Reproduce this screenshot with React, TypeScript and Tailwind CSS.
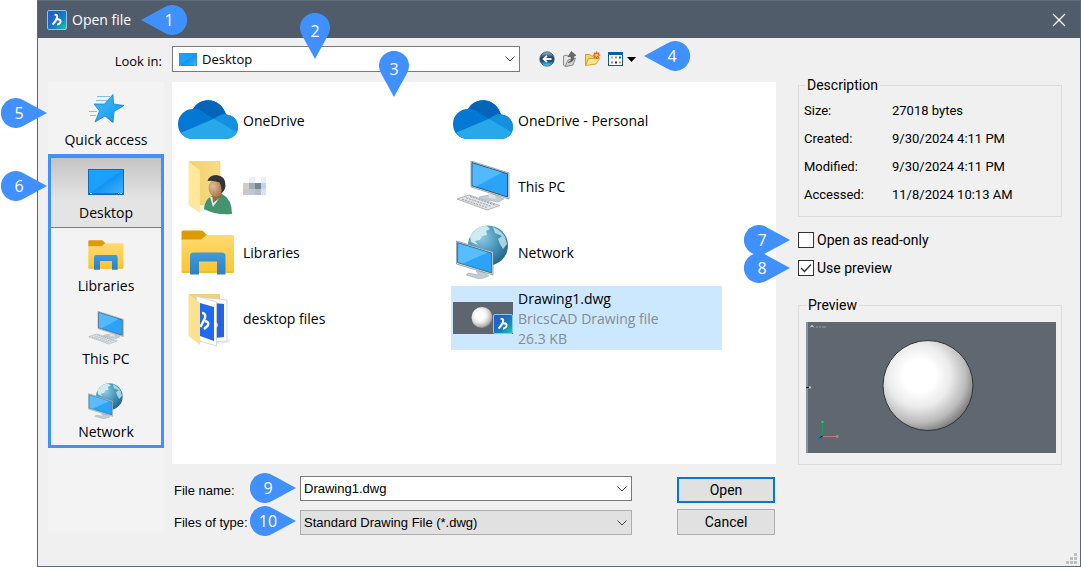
import React, { useState } from 'react';

type Direction = 'left' | 'right' | 'down';

interface CalloutProps {
  n: number;
  direction: Direction;
  className?: string;
}

const Callout: React.FC<CalloutProps> = ({ n, direction, className = '' }) => {
  const isDown = direction === 'down';
  const paths = {
    left: 'M0 15 L23 2.4 A15 15 0 1 1 23 27.6 Z',
    right: 'M46 15 L23 2.4 A15 15 0 1 0 23 27.6 Z',
    down: 'M15 46 L2.4 23 A15 15 0 1 1 27.6 23 Z',
  };
  const textPosition = {
    left: 'pl-[10px]',
    right: 'pr-[10px]',
    down: 'pb-[10px]',
  };

  return (
    <span
      className={`z-10 flex shrink-0 items-center justify-center text-white text-[16px] leading-[20px] font-['Open_Sans',sans-serif] pointer-events-none ${
        isDown ? 'w-[30px] h-[46px]' : 'w-[46px] h-[30px]'
      } ${textPosition[direction]} ${className}`}
    >
      <svg className="absolute inset-0 w-full h-full" viewBox={isDown ? '0 0 30 46' : '0 0 46 30'}>
        <path d={paths[direction]} fill="#4090ff" />
      </svg>
      <span className="relative">{n}</span>
    </span>
  );
};

const AppLogo: React.FC<{ className?: string }> = ({ className }) => (
  <svg className={className} viewBox="0 0 20 20">
    <defs>
      <linearGradient id="logo" x1="0" y1="0" x2="1" y2="1">
        <stop offset="0.3" stopColor="#1e62cf" />
        <stop offset="0.65" stopColor="#1686b8" />
        <stop offset="1" stopColor="#18d8a0" />
      </linearGradient>
    </defs>
    <rect x="0.5" y="0.5" width="19" height="19" rx="1.5" fill="url(#logo)" stroke="#8cc3ea" />
    <path d="M7.6 4.9 C10 4.6 10.6 5.6 9.9 8 C9.4 10 7.6 12.4 5.6 14.6" fill="none" stroke="#fff" strokeWidth="2" />
    <path d="M9.6 9.4 C13 8.8 14.4 10.6 13.2 12.8 C12.6 13.8 11.6 14.5 10 14.8" fill="none" stroke="#fff" strokeWidth="2" />
  </svg>
);

const DesktopIcon: React.FC<{ className?: string }> = ({ className }) => (
  <svg className={className} viewBox="0 0 36 26" preserveAspectRatio="none">
    <defs>
      <linearGradient id="desk" x1="0" y1="0" x2="1" y2="1">
        <stop offset="0" stopColor="#1ba4ff" />
        <stop offset="0.49" stopColor="#1a9ffb" />
        <stop offset="0.5" stopColor="#0f93f5" />
        <stop offset="1" stopColor="#46b4fb" />
      </linearGradient>
    </defs>
    <rect x="0.5" y="0.5" width="35" height="25" fill="url(#desk)" stroke="#0a6fb8" />
    <path d="M1 24.5 H35" stroke="#1080cc" />
    <path d="M2 24.5 h2 M30 24.5 h1.4 M32.4 24.5 h1.4" stroke="#fff" />
  </svg>
);

const StarIcon: React.FC = () => (
  <svg className="w-9 h-8" viewBox="0 0 36 32">
    <defs>
      <linearGradient id="star" x1="0" y1="0" x2="1" y2="1">
        <stop offset="0" stopColor="#4fbcff" />
        <stop offset="1" stopColor="#0895ee" />
      </linearGradient>
    </defs>
    <path d="M25 1.5 L25.5 11 L36 12.5 L26 18.5 L25 29.5 L17 23 L7 29 L11.5 18 L6 11 L16.5 11 Z" fill="url(#star)" stroke="#1684c8" strokeWidth="0.8" />
    <path d="M9 3.5 H22 M8 7.5 H19 M1 18.5 H9 M2 22.5 H8" stroke="#72b9e8" strokeWidth="0.9" />
  </svg>
);

const LibrariesIcon: React.FC<{ className?: string }> = ({ className }) => (
  <svg className={className} viewBox="0 0 54 45">
    <defs>
      <linearGradient id="lib" x1="0" y1="0" x2="0" y2="1">
        <stop offset="0" stopColor="#ffda72" />
        <stop offset="1" stopColor="#fbc52f" />
      </linearGradient>
      <linearGradient id="libBlue" x1="0" y1="0" x2="0" y2="1">
        <stop offset="0" stopColor="#3e9be0" />
        <stop offset="1" stopColor="#2f80bd" />
      </linearGradient>
    </defs>
    <path d="M0.5 2 Q0.5 0.5 2 0.5 H20 Q22 0.5 23 2 L26 5 L22 10 H0.5 Z" fill="#dd9b00" />
    <path d="M0.5 9.5 H20 L25.5 5 H51 Q53 5 53 7 V41 Q53 43 51 43 H2.5 Q0.5 43 0.5 41 Z" fill="url(#lib)" />
    <path d="M0.5 42 H53" stroke="#e9b62c" strokeWidth="1" />
    <path d="M9 44.5 V26 Q9 22.5 12.5 22.5 H41 Q44.5 22.5 44.5 26 V44.5 H36 V31.5 H18 V44.5 Z" fill="url(#libBlue)" />
  </svg>
);

const PcIcon: React.FC<{ className?: string }> = ({ className }) => (
  <svg className={className} viewBox="0 0 54 50">
    <path d="M23 36 L37 33 L48 38 L42 41 L25 38 Z" fill="#c3ccd2" stroke="#97a2a9" strokeWidth="0.5" />
    <path d="M32 32 L39 34 L40 38 L33 37 Z" fill="#dce2e6" />
    <path d="M15 0 L53 12 V38 L15 26 Z" fill="#e6eaed" stroke="#7a858c" strokeWidth="0.7" />
    <path d="M16 1.6 L51.5 12.8 V36 L16 24.8 Z" fill="#2ba3f8" stroke="#27455c" strokeWidth="0.9" />
    <path d="M16.6 2.4 L46 11.5 L20 25.6 L16.6 24.4 Z" fill="#52b9fd" />
    <path d="M1 38 L13 34 L44 44.5 L31 49 Z" fill="#e2e5e7" stroke="#9da6ac" strokeWidth="0.8" />
    <path d="M6 38.2 L31 46.5 M10 36.8 L35 45.2 M14 35.5 L39 44" stroke="#8c969d" strokeWidth="0.9" strokeDasharray="2 1" />
  </svg>
);

const NetworkIcon: React.FC<{ className?: string }> = ({ className }) => (
  <svg className={className} viewBox="0 0 54 54">
    <defs>
      <radialGradient id="globe" cx="0.35" cy="0.3" r="0.8">
        <stop offset="0" stopColor="#8fcbe4" />
        <stop offset="0.5" stopColor="#4796b9" />
        <stop offset="1" stopColor="#1d5f83" />
      </radialGradient>
    </defs>
    <circle cx="32" cy="20.5" r="20" fill="url(#globe)" />
    <path d="M20 4.5 Q25 0.5 31 1 L34 4 L30 6 L31 10 L26 11 L24 15 L19 16 L22 20 L15 17 L14 11 Z" fill="#d8f0f5" opacity="0.9" />
    <path d="M37 2 Q45 5 49 12 L51 19 L47 24 L44 19 L42 14 L46 11 L39 8 Z" fill="#c8e6ef" opacity="0.8" />
    <path d="M20 46 L23 50 L12 48 L10 50 L24 54 L33 51 L27 47 Z" fill="#c3ccd2" stroke="#97a2a9" strokeWidth="0.5" />
    <path d="M0.5 16 L37 27 V50 L0.5 39 Z" fill="#e6eaed" stroke="#7a858c" strokeWidth="0.7" />
    <path d="M1.6 17.6 L35.6 28 V48 L1.6 37.6 Z" fill="#2ba3f8" stroke="#27607f" strokeWidth="0.8" />
    <path d="M2.2 18.4 L32 27.5 L7 38.6 L2.2 37 Z" fill="#58bcfd" />
  </svg>
);

const CloudIcon: React.FC = () => (
  <svg className="w-[60px] h-10" viewBox="0 0 60 40">
    <defs>
      <clipPath id="cloud">
        <path d="M15 39 C6 39 0 32 0 24.5 C0 15 7 9 15 9 C18 4 23 0.2 30 0.2 C38.5 0.2 45.5 6 48 14.5 C55 15 60 20 60 27 C60 34 55 39 47.5 39 Z" />
      </clipPath>
    </defs>
    <g clipPath="url(#cloud)">
      <rect width="60" height="40" fill="#0078d4" />
      <path d="M14 9 C20 8 24 11 27 13.5 L37 19 L50 14 V0 H14 Z" fill="#0364b8" />
      <path d="M36 18.8 C40 15.5 44 14 48 14 L60 14 V36 Z" fill="#1490df" />
      <path d="M0 34 L36 18.8 L60 33 V40 H0 Z" fill="#28a8ea" />
    </g>
  </svg>
);

const UserFolderIcon: React.FC = () => (
  <svg className="w-[60px] h-[58px]" viewBox="0 -4 60 58">
    <defs>
      <linearGradient id="userFolder" x1="0" y1="0" x2="1" y2="0">
        <stop offset="0" stopColor="#f0cf70" />
        <stop offset="1" stopColor="#f8dd83" />
      </linearGradient>
      <radialGradient id="face" cx="0.3" cy="0.4" r="0.8">
        <stop offset="0" stopColor="#e0bd9a" />
        <stop offset="1" stopColor="#966a3c" />
      </radialGradient>
    </defs>
    <path d="M11 0.5 H42 V44 H21 Z" fill="url(#userFolder)" stroke="#edce79" strokeWidth="0.6" />
    <path d="M10.5 0.5 L22 9.5 V52 L10.5 44 Z" fill="#ffe79b" />
    <path d="M22 46 L30 44 V49 L22 52 Z" fill="#f1f1f1" />
    <path d="M26 50 Q26 38 34 35 L44 33 Q54 38 54 53 Q38 54.5 26 48 Z" fill="#43936c" />
    <path d="M32 36 L35 46 L42 36 Z" fill="#e6f0f0" />
    <path d="M34 31 L42 27 L43 36 L35 42 Z" fill="#8f6a45" />
    <ellipse cx="38" cy="27" rx="7.5" ry="9" fill="url(#face)" />
    <path d="M29.5 20 Q31 14.5 38 14 Q48 14.5 47.5 25 Q47 30 43.5 32 Q44 26 41.5 21.5 Q35 19 29.5 20 Z" fill="#343434" />
  </svg>
);

const FilesFolderIcon: React.FC = () => (
  <svg className="w-[60px] h-[58px]" viewBox="0 -4 60 58">
    <path d="M11 1 H42 V40 H21 Z" fill="#efd27c" />
    <path d="M37 48 L54 46 L50 50 L38 51 Z" fill="#ededed" />
    <path d="M21 4 L49 7 V48 L36 49 Z" fill="#fafafa" stroke="#d0d0d0" strokeWidth="0.8" />
    <path d="M35 10 L46 11 V44 L37 45 Z" fill="#2463dd" />
    <path d="M18 3 L38.5 9 V53 L22 48 Z" fill="#fff" stroke="#d0d0d0" strokeWidth="0.8" />
    <path d="M22 10 L36 14 V48 L22 43 Z" fill="#216af0" />
    <path d="M24 20 Q28 20 27 25 L22.5 34 M27 28 Q32 29 29.5 33 L26 36" fill="none" stroke="#fff" strokeWidth="2.4" />
    <path d="M38.5 29 Q41 32 38.5 35 Z" fill="#fff" />
    <path d="M10.5 1 L22 10 V52 L10.5 43 Z" fill="#fbe291" />
  </svg>
);

const Sphere: React.FC<{ id: string; cx: number; cy: number; r: number; stroke?: string }> = ({ id, cx, cy, r, stroke }) => (
  <>
    <defs>
      <radialGradient id={id} cx="0.4" cy="0.39" r="0.7">
        <stop offset="0.26" stopColor="#ffffff" />
        <stop offset="0.5" stopColor="#ebebeb" />
        <stop offset="0.75" stopColor="#bababa" />
        <stop offset="0.9" stopColor="#828282" />
        <stop offset="1" stopColor="#4c4c4c" />
      </radialGradient>
    </defs>
    <circle cx={cx} cy={cy} r={r} fill={`url(#${id})`} stroke={stroke} />
  </>
);

const DrawingIcon: React.FC = () => (
  <span className="relative block w-[60px] h-8">
    <svg className="w-[60px] h-8" viewBox="0 0 60 32">
      <rect width="60" height="32" fill="#5e656f" />
      <Sphere id="thumbSphere" cx={29} cy={15.5} r={10.5} />
      <path d="M3 27.5 H8" stroke="#4d6b6b" />
    </svg>
    <AppLogo className="absolute right-0 bottom-0 w-5 h-5" />
  </span>
);

const PreviewImage: React.FC = () => (
  <svg className="block w-full" viewBox="0 0 250 131">
    <rect width="250" height="131" fill="#5f6770" />
    <rect width="2" height="131" fill="#8b9299" />
    <path d="M4 5.5 L6 3 L8 5.5 M5 4.5 H7" fill="none" stroke="#b5bbc0" />
    <path d="M10 5 h2 M13 5 h2 M16 5 h4" stroke="#9aa1a8" />
    <path d="M0 65.5 H3" stroke="#111" />
    <path d="M3 65.5 H5" stroke="#c5cace" strokeWidth="2" />
    <Sphere id="previewSphere" cx={122} cy={63.5} r={45} stroke="#333" />
    <path d="M16.5 114 V101" stroke="#18a058" />
    <path d="M16.5 99 v2" stroke="#2ecc71" strokeWidth="2" />
    <path d="M17 114.5 H30" stroke="#c4727c" />
    <path d="M30 114.5 h2.5" stroke="#c4727c" strokeWidth="3" />
    <path d="M16.5 114 L13 116.5" stroke="#111" />
    <path d="M11.5 116.5 h3" stroke="#1170e0" strokeWidth="2.5" />
  </svg>
);

const Chevron: React.FC = () => (
  <svg className="absolute right-[5px] top-1/2 -mt-[3px] w-[10px] h-[6px] pointer-events-none" viewBox="0 0 10 6">
    <path d="M0.5 0.5 L5 5 L9.5 0.5" fill="none" stroke="#444" />
  </svg>
);

const toolbar = [
  {
    label: 'Go to last folder visited',
    icon: (
      <>
        <defs>
          <linearGradient id="back" x1="0" y1="0" x2="0" y2="1">
            <stop offset="0" stopColor="#a9bac9" />
            <stop offset="0.4" stopColor="#14466f" />
            <stop offset="0.65" stopColor="#0c5487" />
            <stop offset="1" stopColor="#5ce0f5" />
          </linearGradient>
        </defs>
        <circle cx="8" cy="8" r="7.2" fill="url(#back)" stroke="#33526b" strokeWidth="0.8" />
        <path d="M12.5 8 H5 M8 4.8 L4.6 8 L8 11.2" fill="none" stroke="#fff" strokeWidth="1.8" />
      </>
    ),
  },
  {
    label: 'Up one level',
    icon: (
      <>
        <path d="M1.5 5 L5 4 L6 5.5 L10 5 V14 L3 15.5 L1.5 14 Z" fill="#e4e4e4" stroke="#8b8b8b" />
        <path d="M3 15.5 L6 9 L13.5 7 L11 14 Z" fill="#d2d2d2" stroke="#8b8b8b" />
        <path d="M6 11.5 Q10 10.5 9.2 5.5 H6 L9.5 0.5 L14 4.5 L11.8 5 Q12.5 11 6 11.5 Z" fill="#6a6a6a" stroke="#4c4c4c" strokeWidth="0.6" />
      </>
    ),
  },
  {
    label: 'Create new folder',
    icon: (
      <>
        <path d="M0.5 14.5 V3.5 H5 L6.5 5 H11.5 V8" fill="#f5d36b" stroke="#cf9c25" />
        <path d="M0.5 14.5 L3.5 7.5 H14.5 L11 13 Z" fill="#fde58e" stroke="#d5a431" />
        <path d="M11.5 0.5 V8 M8 4.2 H15.2 M9 1.7 L14 6.7 M14 1.7 L9 6.7" stroke="#ed5420" strokeWidth="1.3" />
        <circle cx="11.5" cy="4.2" r="1.5" fill="#ffd84d" />
      </>
    ),
  },
  {
    label: 'View menu',
    icon: (
      <>
        <rect x="0.5" y="1.5" width="14" height="13" fill="#fff" stroke="#0b5cab" />
        <path d="M0 2.5 H15" stroke="#0b5cab" strokeWidth="3" />
        <path d="M3 6.5 h2" stroke="#aaa" strokeWidth="2" />
        <path d="M7 6.5 h2" stroke="#8a8ab8" strokeWidth="2" />
        <path d="M11 6.5 h2" stroke="#177517" strokeWidth="2" />
        <path d="M3 11.5 h2" stroke="#f07040" strokeWidth="2" />
        <path d="M7 11.5 h2" stroke="#102a90" strokeWidth="2" />
        <path d="M11 11.5 h2" stroke="#d9a400" strokeWidth="2" />
      </>
    ),
  },
];

const places = [
  { name: 'Desktop', icon: <DesktopIcon className="w-9 h-[26px]" /> },
  { name: 'Libraries', icon: <LibrariesIcon className="w-9 h-8" /> },
  { name: 'This PC', icon: <PcIcon className="w-9 h-[34px]" /> },
  { name: 'Network', icon: <NetworkIcon className="w-[36px] h-9" /> },
];

const files = [
  { name: 'OneDrive', icon: <CloudIcon /> },
  { name: 'OneDrive - Personal', icon: <CloudIcon /> },
  { name: '', icon: <UserFolderIcon /> },
  { name: 'This PC', icon: <PcIcon className="w-[54px] h-[50px]" /> },
  { name: 'Libraries', icon: <LibrariesIcon className="w-[54px] h-[45px]" /> },
  { name: 'Network', icon: <NetworkIcon className="w-[54px] h-[54px]" /> },
  { name: 'desktop files', icon: <FilesFolderIcon /> },
  { name: 'Drawing1.dwg', icon: <DrawingIcon />, type: 'BricsCAD Drawing file', size: '26.3 KB' },
];

const details = [
  ['Size:', '27018 bytes'],
  ['Created:', '9/30/2024 4:11 PM'],
  ['Modified:', '9/30/2024 4:11 PM'],
  ['Accessed:', '11/8/2024 10:13 AM'],
];

const PixelatedName: React.FC = () => (
  <svg className="w-[23px] h-[18px]" viewBox="0 0 23 18" shapeRendering="crispEdges">
    <rect x="6" y="0" width="6" height="6" fill="#eaeef5" />
    <rect x="18" y="0" width="5" height="6" fill="#e6effa" />
    <rect x="0" y="6" width="6" height="6" fill="#d0cccc" />
    <rect x="6" y="6" width="6" height="6" fill="#a5abb2" />
    <rect x="12" y="6" width="6" height="6" fill="#7c8494" />
    <rect x="18" y="6" width="5" height="6" fill="#b9d6f2" />
    <rect x="0" y="12" width="6" height="6" fill="#cdc7c8" />
    <rect x="6" y="12" width="6" height="6" fill="#b9c8d4" />
    <rect x="12" y="12" width="6" height="6" fill="#b5bcc4" />
    <rect x="18" y="12" width="5" height="6" fill="#d3e4f8" />
  </svg>
);

const placeClass = 'relative flex h-[71px] w-full flex-col items-center gap-[3px] pt-[7px]';

const App: React.FC = () => {
  const [place, setPlace] = useState('Desktop');
  const [selected, setSelected] = useState('Drawing1.dwg');
  const [fileName, setFileName] = useState('Drawing1.dwg');
  const [readOnly, setReadOnly] = useState(false);
  const [usePreview, setUsePreview] = useState(true);

  const checkboxes = [
    { id: 'read-only', n: 7, label: 'Open as read-only', checked: readOnly, onChange: setReadOnly },
    { id: 'use-preview', n: 8, label: 'Use preview', checked: usePreview, onChange: setUsePreview },
  ];

  return (
    <div className="min-h-screen flex bg-white pl-[37px] text-black text-[14px] leading-[20px] font-['Open_Sans',sans-serif]">
      <div className="relative flex flex-1 flex-col border border-t-0 border-[#5b6777] bg-[#f0f0f0]">
        <header className="flex h-[38px] items-center border-t border-[#5f6c7b] bg-[#515c6b] pl-[9px] pr-[14px] text-white">
          <AppLogo className="w-5 h-5" />
          <h1 className="ml-[5px]">Open file</h1>
          <Callout n={1} direction="left" className="relative ml-[10px]" />
          <button aria-label="Close" className="ml-auto">
            <svg className="w-[14px] h-[14px]" viewBox="0 0 14 14">
              <path d="M1 1 L13 13 M13 1 L1 13" stroke="#fff" strokeWidth="1.2" />
            </svg>
          </button>
        </header>

        <div className="flex flex-1 pl-[10px] pr-[18px]">
          <main className="flex flex-1 flex-col pt-2 pb-[31px]">
            <div className="flex h-[26px] items-center">
              <label htmlFor="look-in" className="w-[114px] pt-1 text-right text-[13px]">Look in:</label>
              <div className="relative ml-[10px] w-[348px]">
                <DesktopIcon className="absolute left-[7px] top-[7px] w-[18px] h-[13px]" />
                <select id="look-in" className="block h-[26px] w-full appearance-none border border-[#7a7a7a] bg-white pl-[29px] text-[13px]">
                  <option>Desktop</option>
                </select>
                <Chevron />
                <Callout n={2} direction="down" className="absolute left-[128px] -top-[33px]" />
              </div>
              <div className="ml-[19px] flex items-center gap-[7px]">
                {toolbar.map((tool) => (
                  <button key={tool.label} aria-label={tool.label}>
                    <svg className="w-4 h-4" viewBox="0 0 16 16">{tool.icon}</svg>
                  </button>
                ))}
              </div>
              <svg className="ml-[3px] w-[9px] h-[5px]" viewBox="0 0 9 5">
                <path d="M0 0 H9 L4.5 5 Z" fill="#000" />
              </svg>
              <Callout n={4} direction="left" className="relative ml-2 mb-[6px]" />
            </div>

            <div className="mt-[10px] flex flex-1 gap-2">
              <nav className="mb-[3px] w-[116px] bg-[#f3f3f3] pt-[2px]">
                <button className={placeClass} onClick={() => setPlace('Quick access')}>
                  <span className="flex h-9 items-center"><StarIcon /></span>
                  Quick access
                  <Callout n={5} direction="right" className="absolute right-full mr-px top-[14px]" />
                </button>
                <div className="relative mt-[2px] flex flex-col gap-[2px]">
                  {places.map((p) => (
                    <button
                      key={p.name}
                      onClick={() => setPlace(p.name)}
                      className={`${placeClass} ${
                        place === p.name ? 'bg-linear-to-b from-[#c3c3c3] to-[#e4e4e4] to-60% shadow-[inset_0_1px_0_#808080,inset_0_-1px_0_#808080]' : ''
                      }`}
                    >
                      <span className="flex h-9 items-center">{p.icon}</span>
                      {p.name}
                    </button>
                  ))}
                  <div className="absolute inset-x-0 -top-[3px] -bottom-px border-[3px] border-[#4090ff] pointer-events-none" />
                  <Callout n={6} direction="right" className="absolute right-full mr-px top-[14px]" />
                </div>
              </nav>

              <div className="flex flex-1 flex-col">
                <div className="relative flex-1 bg-white pt-[6px] pl-1">
                  <Callout n={3} direction="down" className="absolute left-[207px] -top-[31px]" />
                  <ul className="grid grid-cols-[271px_271px] gap-x-1 gap-y-[2px]">
                    {files.map((file) => (
                      <li key={file.name}>
                        <button
                          aria-label={file.name || 'User folder'}
                          onClick={() => setSelected(file.name)}
                          className={`flex h-16 w-full items-center gap-[5px] pl-[2px] text-left ${
                            selected === file.name ? 'bg-[#cce8ff]' : ''
                          }`}
                        >
                          <span className="flex w-[60px] justify-center">{file.icon}</span>
                          {file.name ? (
                            <span className="pt-[2px]">
                              {file.name}
                              {file.type && <span className="block text-[#858b91]">{file.type}</span>}
                              {file.size && <span className="block text-[#858b91]">{file.size}</span>}
                            </span>
                          ) : (
                            <PixelatedName />
                          )}
                        </button>
                      </li>
                    ))}
                  </ul>
                </div>

                <div className="mt-3 flex">
                  <div className="grid grid-cols-[128px_332px] items-center gap-y-[9px] text-[13px] font-['Liberation_Sans',sans-serif]">
                    <label htmlFor="file-name" className="pl-[2px] pt-1">File name:</label>
                    <div className="relative">
                      <input
                        id="file-name"
                        type="text"
                        value={fileName}
                        onChange={(e) => setFileName(e.target.value)}
                        className="block h-[25px] w-full border border-[#7a7a7a] bg-white px-[3px] focus:outline-none"
                      />
                      <Chevron />
                      <Callout n={9} direction="right" className="absolute right-full mr-1 -top-[3px]" />
                    </div>
                    <label htmlFor="file-type" className="pl-[2px]">Files of type:</label>
                    <div className="relative">
                      <select id="file-type" className="block h-[25px] w-full appearance-none border border-[#adadad] bg-[#e1e1e1] px-[3px]">
                        <option>Standard Drawing File (*.dwg)</option>
                      </select>
                      <Chevron />
                      <Callout n={10} direction="right" className="absolute right-full mr-1 -top-1" />
                    </div>
                  </div>
                  <div className="ml-[45px] flex w-[98px] flex-col gap-[6px] pt-px font-[Roboto,sans-serif]">
                    <button className="h-[26px] border-2 border-[#0078d7] bg-[#e1e1e1]">Open</button>
                    <button className="h-[26px] border border-[#adadad] bg-[#e1e1e1]">Cancel</button>
                  </div>
                </div>
              </div>
            </div>
          </main>

          <aside className="ml-[22px] w-[264px] pt-[37px] font-[Roboto,sans-serif]">
            <fieldset className="border border-[#dcdcdc] px-[5px] pt-[2px] pb-[7px]">
              <legend className="ml-[1px] px-[2px]">Description</legend>
              <dl className="grid grid-cols-[88px_1fr] text-[13px] leading-[28px]">
                {details.map(([label, value]) => (
                  <React.Fragment key={label}>
                    <dt>{label}</dt>
                    <dd>{value}</dd>
                  </React.Fragment>
                ))}
              </dl>
            </fieldset>

            <div className="mt-[13px] flex flex-col gap-2">
              {checkboxes.map((box) => (
                <div key={box.id} className="relative flex items-center gap-[3px]">
                  <input
                    id={box.id}
                    type="checkbox"
                    checked={box.checked}
                    onChange={(e) => box.onChange(e.target.checked)}
                    className="w-4 h-4 appearance-none border border-[#333] bg-white"
                  />
                  {box.checked && (
                    <svg className="absolute left-0 top-[2px] w-4 h-4 pointer-events-none" viewBox="0 0 16 16">
                      <path d="M3 8 L6.5 11.5 L13 4.5" fill="none" stroke="#333" strokeWidth="1.4" />
                    </svg>
                  )}
                  <label htmlFor={box.id}>{box.label}</label>
                  <Callout n={box.n} direction="right" className="absolute right-full mr-2 -top-[5px]" />
                </div>
              ))}
            </div>

            <fieldset className="mt-[17px] border border-[#dcdcdc] pt-[7px] pr-[5px] pb-[11px] pl-[7px]">
              <legend className="px-[2px]">Preview</legend>
              {usePreview && <PreviewImage />}
            </fieldset>
          </aside>
        </div>

        <svg className="absolute right-[3px] bottom-[2px] w-[11px] h-[11px]" viewBox="0 0 11 11">
          <path d="M8 0h3v3h-3z M8 4h3v3h-3z M8 8h3v3h-3z M4 4h3v3h-3z M4 8h3v3h-3z M0 8h3v3h-3z" fill="#bfbfbf" />
        </svg>
      </div>
    </div>
  );
};

export default App;
